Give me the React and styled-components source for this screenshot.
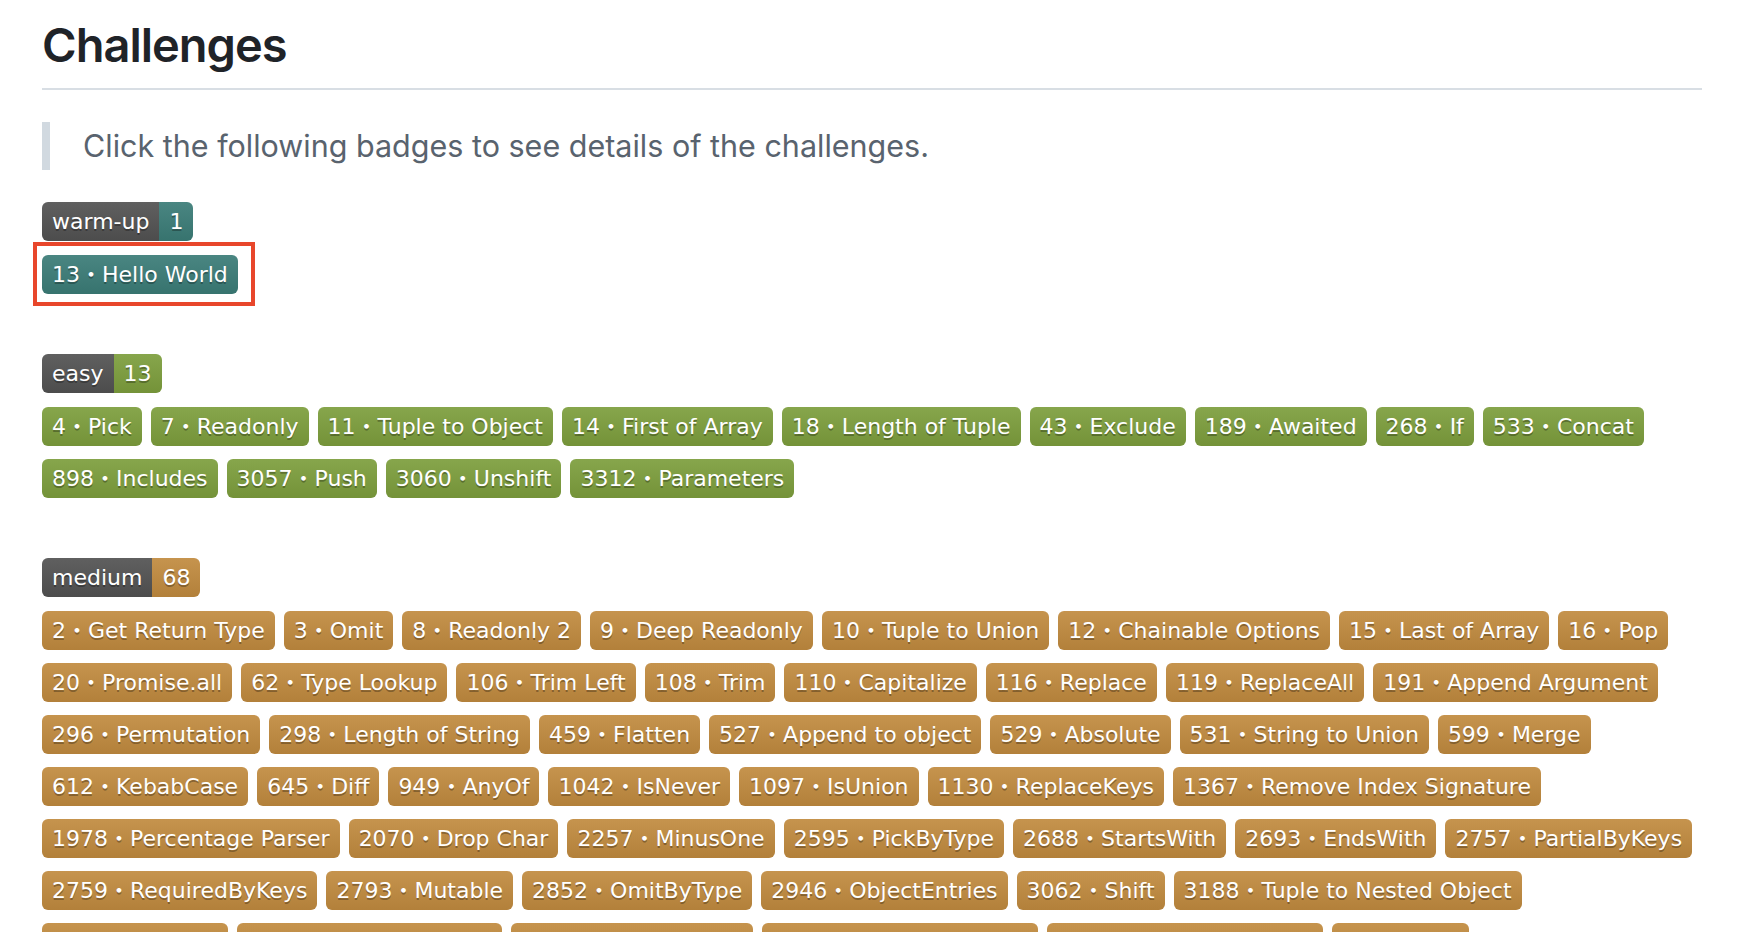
import React from "react";
import styled, { createGlobalStyle } from "styled-components";

const warmUp = [{ id: 13, title: "Hello World" }];

const easy = [
  [4, "Pick"],
  [7, "Readonly"],
  [11, "Tuple to Object"],
  [14, "First of Array"],
  [18, "Length of Tuple"],
  [43, "Exclude"],
  [189, "Awaited"],
  [268, "If"],
  [533, "Concat"],
  [898, "Includes"],
  [3057, "Push"],
  [3060, "Unshift"],
  [3312, "Parameters"],
];

const medium = [
  [2, "Get Return Type"],
  [3, "Omit"],
  [8, "Readonly 2"],
  [9, "Deep Readonly"],
  [10, "Tuple to Union"],
  [12, "Chainable Options"],
  [15, "Last of Array"],
  [16, "Pop"],
  [20, "Promise.all"],
  [62, "Type Lookup"],
  [106, "Trim Left"],
  [108, "Trim"],
  [110, "Capitalize"],
  [116, "Replace"],
  [119, "ReplaceAll"],
  [191, "Append Argument"],
  [296, "Permutation"],
  [298, "Length of String"],
  [459, "Flatten"],
  [527, "Append to object"],
  [529, "Absolute"],
  [531, "String to Union"],
  [599, "Merge"],
  [612, "KebabCase"],
  [645, "Diff"],
  [949, "AnyOf"],
  [1042, "IsNever"],
  [1097, "IsUnion"],
  [1130, "ReplaceKeys"],
  [1367, "Remove Index Signature"],
  [1978, "Percentage Parser"],
  [2070, "Drop Char"],
  [2257, "MinusOne"],
  [2595, "PickByType"],
  [2688, "StartsWith"],
  [2693, "EndsWith"],
  [2757, "PartialByKeys"],
  [2759, "RequiredByKeys"],
  [2793, "Mutable"],
  [2852, "OmitByType"],
  [2946, "ObjectEntries"],
  [3062, "Shift"],
  [3188, "Tuple to Nested Object"],
  [3192, "Reverse"],
  [3196, "Flip Arguments"],
  [3243, "FlattenDepth"],
  [3326, "BEM style string"],
  [3376, "InorderTraversal"],
  [4179, "Flip"],
  [4182, "Fibonacci Sequence"],
  [4260, "AllCombinations"],
  [4425, "Greater Than"],
  [4471, "Zip"],
  [4484, "IsTuple"],
  [4499, "Chunk"],
  [4518, "Fill"],
  [4803, "Trim Right"],
  [5117, "Without"],
  [5140, "Trunc"],
  [5153, "IndexOf"],
  [5310, "Join"],
  [5317, "LastIndexOf"],
  [5360, "Unique"],
  [5821, "MapTypes"],
  [7544, "Construct Tuple"],
  [8640, "Number Range"],
  [8767, "Combination"],
  [8987, "Subsequence"],
];

const COLORS = {
  "warm-up": "#3d807b",
  easy: "#81a33f",
  medium: "#c78f41",
};

const sections = [
  { level: "warm-up", items: warmUp.map((c) => [c.id, c.title]), highlight: 13 },
  { level: "easy", items: easy },
  { level: "medium", items: medium },
];

const App = () => {
  return (
    <>
      <GlobalStyle />
      <Page>
        <Title>Challenges</Title>
        <Quote>Click the following badges to see details of the challenges.</Quote>

        <Sections>
          {sections.map((section) => (
            <Section key={section.level}>
              <HeaderBadge>
                <Label>{section.level}</Label>
                <Count $color={COLORS[section.level]}>{section.items.length}</Count>
              </HeaderBadge>
              <BadgeList>
                {section.items.map(([id, title]) => {
                  const badge = (
                    <Badge key={id} $color={COLORS[section.level]}>
                      {id}・{title}
                    </Badge>
                  );
                  return id === section.highlight ? (
                    <Highlight key={id}>{badge}</Highlight>
                  ) : (
                    badge
                  );
                })}
              </BadgeList>
            </Section>
          ))}
        </Sections>
      </Page>
    </>
  );
};

export default App;

// ⬇ styled-components

const GlobalStyle = createGlobalStyle`
  body {
    margin: 0;
    background: #ffffff;
    font-family: Inter, "Noto Sans", "Liberation Sans", sans-serif;
  }
`;

const Page = styled.div`
  padding: 0 42px;
`;

const Title = styled.h1`
  margin: 0;
  padding: 16px 0 13px;
  font-size: 47px;
  line-height: 1.25;
  font-weight: 600;
  letter-spacing: -1px;
  color: #1f2328;
  border-bottom: 2px solid #d8dee4;
`;

const Quote = styled.blockquote`
  margin: 32px 0;
  padding: 0 0 0 33px;
  border-left: 8px solid #d1d9e0;
  font-size: 30.5px;
  line-height: 48px;
  color: #59636e;
`;

const Sections = styled.div`
  display: flex;
  flex-direction: column;
  gap: 60px;
`;

const Section = styled.div`
  display: flex;
  flex-direction: column;
  align-items: flex-start;
  gap: 14px;
`;

const BadgeList = styled.div`
  display: flex;
  flex-wrap: wrap;
  gap: 13px 9px;
`;

const shield = `
  display: inline-flex;
  align-items: center;
  height: 39px;
  font-family: "DejaVu Sans", Verdana, "Noto Sans CJK JP", sans-serif;
  font-size: 22px;
  line-height: 39px;
  color: #ffffff;
  text-shadow: 0 2px 0 rgba(1, 1, 1, 0.3);
  white-space: nowrap;
  background-image: linear-gradient(rgba(187, 187, 187, 0.1), rgba(0, 0, 0, 0.1));
`;

const HeaderBadge = styled.div`
  display: inline-flex;
  border-radius: 6px;
  overflow: hidden;
`;

const Label = styled.span`
  ${shield}
  padding: 0 10px;
  background-color: #555555;
`;

const Count = styled.span`
  ${shield}
  padding: 0 10px;
  background-color: ${(p) => p.$color};
`;

const Badge = styled.span`
  ${shield}
  padding: 0 10px;
  border-radius: 6px;
  background-color: ${(p) => p.$color};
`;

const Highlight = styled.span`
  position: relative;
  display: inline-flex;

  &::after {
    content: "";
    position: absolute;
    top: -13px;
    left: -9px;
    right: -17px;
    bottom: -12px;
    border: 4px solid #e8462b;
    pointer-events: none;
  }
`;
